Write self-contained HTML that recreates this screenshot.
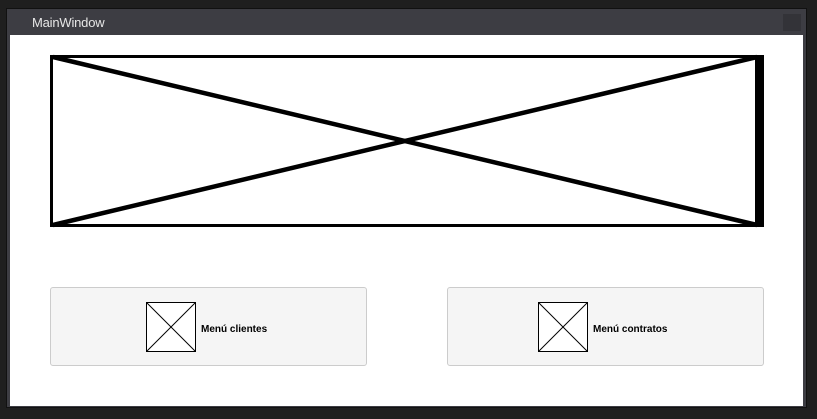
<!DOCTYPE html>
<html><head><meta charset="utf-8"><style>
html,body{margin:0;padding:0}
body{width:817px;height:419px;background:#1f1f1f;position:relative;overflow:hidden;font-family:"Liberation Sans",sans-serif}
.frame{position:absolute;left:6px;top:8px;width:801px;height:400px;background:#3d3d43;border:1px solid #111;box-sizing:border-box}
.title{position:absolute;left:32px;top:15px;color:#e6e6e6;font-size:13px;letter-spacing:-0.2px}
.close{position:absolute;left:783px;top:14px;width:18px;height:17px;background:#333338}
.content{position:absolute;left:10px;top:35px;width:793px;height:371px;background:#fff}
.btn{position:absolute;top:287px;width:317px;height:79px;background:#f5f5f5;border:1px solid #ccc;border-radius:3px;box-sizing:border-box}
.lbl{position:absolute;font-size:10px;font-weight:bold;color:#000;top:324px}
</style></head><body>
<div class="frame"></div>
<div class="title">MainWindow</div>
<div class="close"></div>
<div class="content"></div>
<svg style="position:absolute;left:0;top:0" width="817" height="419">
<rect x="51.5" y="56.5" width="708" height="169" fill="none" stroke="#000" stroke-width="3"/>
<rect x="755" y="55" width="9" height="172" fill="#000"/>
<line x1="53" y1="57" x2="757" y2="225" stroke="#000" stroke-width="4.5"/>
<line x1="53" y1="225" x2="757" y2="57" stroke="#000" stroke-width="4.5"/>
</svg>
<div class="btn" style="left:50px"></div>
<div class="btn" style="left:447px"></div>
<svg style="position:absolute;left:0;top:0" width="817" height="419">
<g stroke="#000" fill="#fff">
<rect x="146.5" y="302.5" width="49" height="49"/>
<line x1="146.5" y1="302.5" x2="195.5" y2="351.5"/><line x1="195.5" y1="302.5" x2="146.5" y2="351.5"/>
<rect x="538.5" y="302.5" width="49" height="49"/>
<line x1="538.5" y1="302.5" x2="587.5" y2="351.5"/><line x1="587.5" y1="302.5" x2="538.5" y2="351.5"/>
</g></svg>
<div class="lbl" style="left:201px">Menú clientes</div>
<div class="lbl" style="left:593px">Menú contratos</div>
</body></html>
